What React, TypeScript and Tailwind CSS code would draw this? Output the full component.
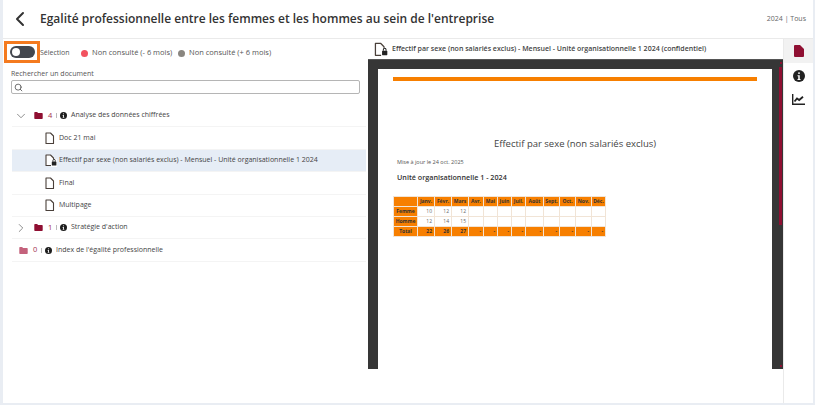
import { ChevronDown, ChevronLeft, ChevronRight, Search } from "lucide-react";

const months = ["Janv.", "Févr.", "Mars", "Avr.", "Mai", "Juin", "Juil.", "Août", "Sept.", "Oct.", "Nov.", "Déc."];

const rows = [
  { label: "Femme", values: ["10", "12", "12"] },
  { label: "Homme", values: ["12", "14", "15"] },
];

const totals = ["22", "26", "27"];

const FolderIcon = ({ className }: { className: string }) => (
  <svg viewBox="0 0 12 10" className={className} fill="currentColor" aria-hidden="true">
    <path d="M0 1a1 1 0 0 1 1-1h3l1.4 1.4H11a1 1 0 0 1 1 1V9a1 1 0 0 1-1 1H1a1 1 0 0 1-1-1z" />
  </svg>
);

const InfoIcon = ({ className }: { className: string }) => (
  <svg viewBox="0 0 16 16" className={className} aria-hidden="true">
    <circle cx="8" cy="8" r="8" fill="currentColor" />
    <rect x="6.8" y="3" width="2.4" height="2.4" rx="1" fill="#fff" />
    <path d="M6 7h3v5h1v1.4H6V12h1V8.4H6z" fill="#fff" />
  </svg>
);

const DocIcon = ({ locked, className }: { locked?: boolean; className: string }) => (
  <svg viewBox="0 0 14 14" className={className} aria-hidden="true">
    <path d="M3 2h4.5l3 3v7.5H3z" fill="#fff" stroke="#4a403a" strokeWidth="1.1" strokeLinejoin="round" />
    {locked && (
      <g>
        <rect x="8" y="6" width="6" height="8" fill="#fff" />
        <rect x="8.8" y="8.6" width="4.6" height="3.8" rx=".5" fill="#222" />
        <path d="M9.9 8.6V7.6a1.2 1.2 0 0 1 2.4 0v1" fill="none" stroke="#222" strokeWidth=".9" />
      </g>
    )}
  </svg>
);

const FolderMeta = ({ count, light }: { count: string; light?: boolean }) => (
  <>
    <FolderIcon className={`h-[7px] w-[9px] shrink-0 ${light ? "text-[#c4627c]" : "text-[#8f0f32]"}`} />
    <span className="ml-[5px] w-[4px] text-[7.5px] text-[#a3324f]">{count}</span>
    <span className="ml-[4px] h-[5px] w-px bg-[#bbb]" />
    <InfoIcon className="ml-[3px] h-[7px] w-[7px] shrink-0 text-[#1d1d1d]" />
  </>
);

const DocRow = ({ name, locked, active }: { name: string; locked?: boolean; active?: boolean }) => (
  <div className={`flex h-[22.4px] items-center border-b border-[#f4f4f4] pl-[31px] ${active ? "bg-[#e6edf6]" : ""}`}>
    <DocIcon locked={locked} className="h-[14px] w-[14px] shrink-0" />
    <span className="ml-[2px] text-[7px] text-[#444]">{name}</span>
  </div>
);

const PdfTable = () => (
  <div className="mt-[14px] grid w-fit grid-cols-[23px_16px_16px_16px_14px_13px_13px_13px_17px_15px_15px_15px_13px] auto-rows-[9px] gap-px bg-[#f1e4d6] p-px text-[5px] font-bold leading-[9px] text-[#333]">
    <div className="bg-[#f77f00]" />
    {months.map((m) => (
      <div key={m} className="bg-[#f77f00] text-center">
        {m}
      </div>
    ))}
    {rows.map((row) => (
      <div key={row.label} className="contents">
        <div className="bg-[#f77f00] text-center">{row.label}</div>
        {months.map((m, i) => (
          <div key={m} className="bg-white pr-[2px] text-right font-normal text-[#666]">
            {row.values[i]}
          </div>
        ))}
      </div>
    ))}
    <div className="bg-[#f77f00] text-center">Total</div>
    {months.map((m, i) => (
      <div key={m} className="bg-[#f77f00] pr-[2px] text-right">
        {totals[i] ?? "-"}
      </div>
    ))}
  </div>
);

export default function App() {
  return (
    <div className="h-[405px] w-[815px] overflow-hidden bg-[#e9edf3] pb-[2px] pl-[3px] pr-[2px] font-['Open_Sans',sans-serif]">
      <div className="flex h-[403px] flex-col bg-white">
        <header className="flex h-[39px] shrink-0 items-center border-b border-[#eaeaea] pr-[7px]">
          <ChevronLeft className="ml-[5px] h-[24px] w-[24px] text-[#333]" strokeWidth={2} />
          <h1 className="ml-[8px] flex-1 text-[12px] font-semibold text-[#333]">
            Egalité professionnelle entre les femmes et les hommes au sein de l'entreprise
          </h1>
          <span className="text-[7px] text-[#666]">2024 | Tous</span>
        </header>

        <div className="flex min-h-0 flex-1">
          <section className="w-[365px] shrink-0">
            <div className="ml-[1px] mt-[2px] flex h-[24px] items-center">
              <div className="flex h-[22px] w-[36px] items-center justify-center self-start border-[3px] border-[#f47a1f]">
                <div className="flex h-[12px] w-[25px] items-center rounded-full bg-[#43474f] pl-[2px]">
                  <div className="h-[8px] w-[8px] rounded-full bg-white" />
                </div>
              </div>
              <span className="w-[29px] text-[7px] text-[#555]">Sélection</span>
              <span className="ml-[12px] h-[7px] w-[7px] rounded-full bg-[#f2525f]" />
              <span className="ml-[4px] w-[86px] text-[7.5px] text-[#555]">Non consulté (- 6 mois)</span>
              <span className="h-[7px] w-[7px] rounded-full bg-[#8a8680]" />
              <span className="ml-[4px] text-[7.5px] text-[#555]">Non consulté (+ 6 mois)</span>
            </div>

            <div className="ml-[8px] mt-[3px] text-[7px] leading-[11px] text-[#555]">Rechercher un document</div>
            <div className="ml-[8px] mt-[1px] flex h-[14px] w-[349px] items-center rounded-[2px] border border-[#b5b5b5] pl-[2px]">
              <Search className="h-[9px] w-[9px] text-[#555]" strokeWidth={2.25} />
            </div>

            <div className="ml-[9px] mt-[11px] w-[354px]">
              <div className="flex h-[22.4px] items-center border-b border-[#f4f4f4] pl-[2px]">
                <ChevronDown className="h-[14px] w-[14px] text-[#666]" strokeWidth={1.25} />
                <span className="w-[6px]" />
                <FolderMeta count="4" />
                <span className="ml-[4px] text-[7px] text-[#444]">Analyse des données chiffrées</span>
              </div>
              <DocRow name="Doc 21 mai" />
              <DocRow name="Effectif par sexe (non salariés exclus) - Mensuel - Unité organisationnelle 1 2024" locked active />
              <DocRow name="Final" />
              <DocRow name="Multipage" />
              <div className="flex h-[22.4px] items-center border-b border-[#f4f4f4] pl-[2px]">
                <ChevronRight className="h-[14px] w-[14px] text-[#666]" strokeWidth={1.25} />
                <span className="w-[6px]" />
                <FolderMeta count="1" />
                <span className="ml-[4px] text-[7px] text-[#444]">Stratégie d'action</span>
              </div>
              <div className="flex h-[22.4px] items-center border-b border-[#f4f4f4] pl-[7px]">
                <FolderMeta count="0" light />
                <span className="ml-[4px] text-[7px] text-[#444]">Index de l'égalité professionnelle</span>
              </div>
            </div>
          </section>

          <section className="flex w-[415px] shrink-0 flex-col">
            <div className="flex h-[20px] shrink-0 items-center pl-[4px]">
              <DocIcon locked className="h-[16px] w-[16px] shrink-0" />
              <span className="ml-[4px] text-[7px] font-semibold text-[#444]">
                Effectif par sexe (non salariés exclus) - Mensuel - Unité organisationnelle 1 2024 (confidentiel)
              </span>
            </div>
            <div className="relative h-[310px] shrink-0 border-t border-[#555] bg-[#363636] pl-[10px] pt-[9px]">
              <div className="h-[334px] w-[394px] bg-white px-[15px] pt-[8px]">
                <div className="h-[4px] w-[364px] bg-[#f77f00]" />
                <div className="mt-[56px] text-center text-[9.5px] leading-[14px] text-[#444]">Effectif par sexe (non salariés exclus)</div>
                <div className="ml-[4px] mt-[7px] text-[5.5px] leading-[8px] text-[#555]">Mise à jour le 24 oct. 2025</div>
                <div className="ml-[4px] mt-[6px] text-[7.2px] font-semibold leading-[10px] text-[#333]">Unité organisationnelle 1 - 2024</div>
                <PdfTable />
              </div>
              <div className="absolute right-[1.5px] top-[2px] h-[2px] w-[2px] bg-[#8f0f32]" />
              <div className="absolute right-[1px] top-[7px] h-[158px] w-[3px] bg-[#8f0f32]" />
              <div className="absolute bottom-[2px] right-[1.5px] h-[2px] w-[2px] bg-[#8f0f32]" />
            </div>
          </section>

          <aside className="flex w-[30px] shrink-0 flex-col items-center border-l border-[#eaeaea]">
            <div className="flex h-[24px] w-full items-center justify-center bg-[#f2f2f2]">
              <svg viewBox="0 0 10 12" className="h-[12px] w-[10px] text-[#8f0f32]" fill="currentColor" aria-hidden="true">
                <path d="M1 0h5l4 4v7a1 1 0 0 1-1 1H1a1 1 0 0 1-1-1V1a1 1 0 0 1 1-1z" />
              </svg>
            </div>
            <InfoIcon className="mt-[7px] h-[12px] w-[12px] text-[#222]" />
            <svg viewBox="0 0 13 11" className="mt-[12px] h-[11px] w-[13px] text-[#222]" fill="none" stroke="currentColor" aria-hidden="true">
              <path d="M.7 0v10.2H13" strokeWidth="1.4" />
              <path d="M2.5 7.5 5 4.5l2.2 1.5 3.8-3.2" strokeWidth="1.8" />
            </svg>
          </aside>
        </div>
      </div>
    </div>
  );
}
